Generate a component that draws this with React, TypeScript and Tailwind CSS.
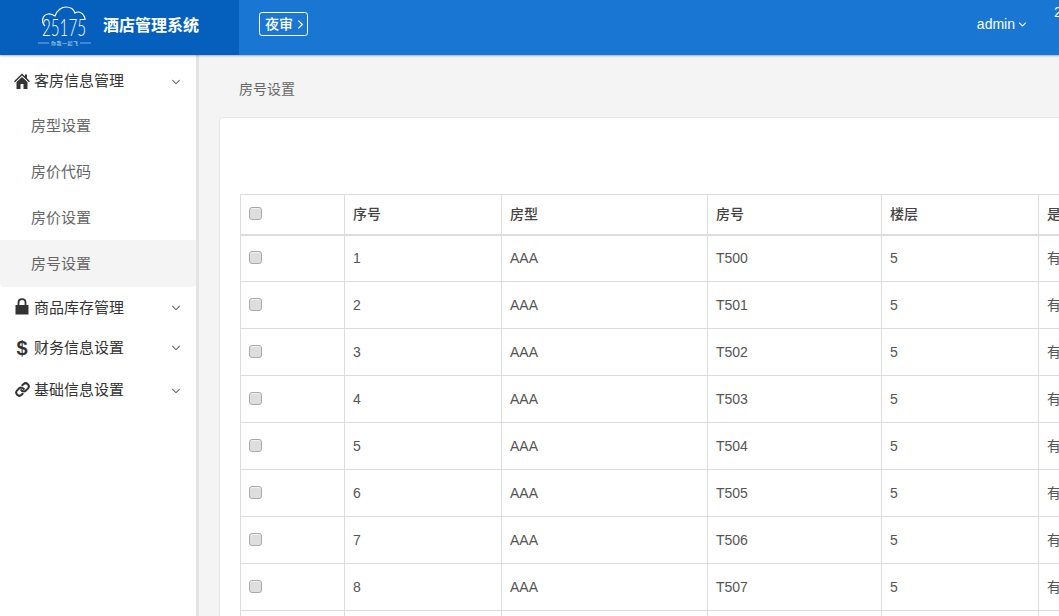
import { FiLink } from "react-icons/fi";
import { IoIosArrowDown, IoIosArrowForward } from "react-icons/io";

const rooms = ["T500", "T501", "T502", "T503", "T504", "T505", "T506", "T507", "T508"];

const font = "font-['Liberation_Sans','Noto_Sans_CJK_SC',sans-serif]";

const Check = () => (
  <span className="block w-[13px] h-[13px] rounded-[3px] border border-[#aaa] bg-[#dedede] shadow-[inset_0_1px_0_#f2f2f2]" />
);

const Logo = () => (
  <svg width="54" height="44" viewBox="0 0 54 44">
    <path
      d="M7 20 C3 16 4 9 10 8 C13 7.5 15 9 17 10 C19 4 24 1 28 1 C33 1 36 4 37 7 C40 5 44 6 46 10 C47 11 47 13 47 14"
      fill="none"
      stroke="white"
      strokeWidth="1.2"
    />
    <text x="4" y="30" fontFamily="Lato, sans-serif" fontWeight="300" fontSize="24" fill="white" textLength="44" lengthAdjust="spacingAndGlyphs">
      25175
    </text>
    <path d="M0 37 H11 M42 37 H53" stroke="#b9d0ec" strokeWidth="0.7" />
    <text x="13" y="39" fontFamily="Noto Sans CJK SC, sans-serif" fontSize="5" fill="#cfe0f5" textLength="27">
      你我一起飞
    </text>
  </svg>
);

const HomeIcon = () => (
  <svg width="16" height="16" viewBox="0 0 16 16" fill="#333" className="mb-[1px]">
    <path d="M8 0.5 L11 3.3 V1.5 H13 V5.2 L16 8.2 L15 9.2 L8 2.6 L1 9.2 L0 8.2 Z" />
    <path d="M8 4 L13.5 9 V16 H9.5 V11 H6.5 V16 H2.5 V9 Z" />
  </svg>
);

const LockIcon = () => (
  <svg width="14" height="17" viewBox="0 0 14 17" fill="#333" className="mb-[3px]">
    <path d="M0.5 7 H13.5 V16.5 H0.5 Z" />
    <path d="M3.5 7 V4.5 C3.5 2.5 5 1.2 7 1.2 C9 1.2 10.5 2.5 10.5 4.5 V7" fill="none" stroke="#333" strokeWidth="1.8" />
  </svg>
);

const Parent = ({ icon, label, cls }: { icon: React.ReactNode; label: string; cls: string }) => (
  <div className={`flex items-center pl-[12px] pr-[14px] text-[15px] text-[#333] ${cls}`}>
    <span className="w-[22px] pr-[2px] flex justify-center shrink-0 text-[#333]">{icon}</span>
    <span className="flex-1">{label}</span>
    <IoIosArrowDown size={12} className="text-[#666]" />
  </div>
);

const Sub = ({ label, active }: { label: string; active?: boolean }) => (
  <div
    className={`flex items-center pl-[31px] text-[15px] text-[#666] ${
      active ? "h-[47px] pt-[1px] bg-[#f4f4f4] rounded-b-[4px]" : "h-[46px] pt-[2px]"
    }`}
  >
    {label}
  </div>
);

const App = () => {
  const th = "border border-[#ddd] border-b-[2px] px-[8px] text-left font-medium text-[14px] text-[#444]";
  const td = "border border-[#ddd] px-[8px] text-[14px] text-[#555]";

  return (
    <div className={`w-[1059px] h-[616px] overflow-hidden flex flex-col bg-[#f4f4f4] ${font}`}>
      {/* Top bar */}
      <header className="h-[55px] shrink-0 flex bg-[#1976d3] text-white shadow-[0_1px_2px_rgba(0,0,0,0.3)] relative z-10">
        <div className="w-[239px] shrink-0 bg-[#0560bd] flex items-center pl-[38px]">
          <Logo />
          <span className="ml-[11px] mb-[3px] text-[16px] font-bold">酒店管理系统</span>
        </div>
        <div className="flex items-center flex-1 pl-[20px]">
          <button className="h-[24px] w-[49px] mb-[7px] pl-[5px] flex items-center gap-[1px] rounded-[3px] border border-white text-[14px] font-medium">
            夜审
            <IoIosArrowForward size={13} />
          </button>
          <div className="ml-auto mr-[31px] mb-[6px] flex items-center text-[14px]">
            admin
            <IoIosArrowDown size={11} className="ml-[2px]" />
          </div>
        </div>
        <span className="absolute left-[1054px] top-[2px] text-[14px]">2</span>
      </header>

      <div className="flex flex-1 min-h-0">
        {/* Sidebar */}
        <aside className="w-[199px] shrink-0 bg-white border-r-[3px] border-[#e4e4e4] pt-[3px]">
          <Parent icon={<HomeIcon />} label="客房信息管理" cls="h-[44px] pt-[3px]" />
          <Sub label="房型设置" />
          <Sub label="房价代码" />
          <Sub label="房价设置" />
          <Sub label="房号设置" active />
          <Parent icon={<LockIcon />} label="商品库存管理" cls="h-[41px] pt-[1px]" />
          <Parent
            icon={<span className="text-[20px] font-bold leading-none">$</span>}
            label="财务信息设置"
            cls="h-[41px] pb-[1px]"
          />
          <Parent
            icon={<FiLink size={15} strokeWidth={3.2} className="mb-[2px]" />}
            label="基础信息设置"
            cls="h-[41px] pt-[2px]"
          />
        </aside>

        {/* Content */}
        <main className="flex-1 min-w-0 overflow-hidden pl-[20px]">
          <div className="h-[62px] flex items-center pl-[20px] pt-[6px] text-[14px] text-[#666]">房号设置</div>
          <div className="w-[1000px] h-[600px] bg-white rounded-[4px] border-t border-l border-[#e6e6e6] pt-[76px] pl-[20px]">
            <table className="table-fixed border-collapse w-[960px]">
              <colgroup>
                <col className="w-[104px]" />
                <col className="w-[157px]" />
                <col className="w-[206px]" />
                <col className="w-[174px]" />
                <col className="w-[157px]" />
                <col />
              </colgroup>
              <thead>
                <tr className="h-[40px]">
                  <th className={`${th} pb-[2px]`}>
                    <Check />
                  </th>
                  <th className={th}>序号</th>
                  <th className={th}>房型</th>
                  <th className={th}>房号</th>
                  <th className={th}>楼层</th>
                  <th className={th}>是否启用</th>
                </tr>
              </thead>
              <tbody>
                {rooms.map((room, i) => (
                  <tr key={room} className="h-[47px]">
                    <td className={`${td} pb-[2px]`}>
                      <Check />
                    </td>
                    <td className={td}>{i + 1}</td>
                    <td className={td}>AAA</td>
                    <td className={td}>{room}</td>
                    <td className={td}>5</td>
                    <td className={td}>有效</td>
                  </tr>
                ))}
              </tbody>
            </table>
          </div>
        </main>
      </div>
    </div>
  );
};

export default App;
